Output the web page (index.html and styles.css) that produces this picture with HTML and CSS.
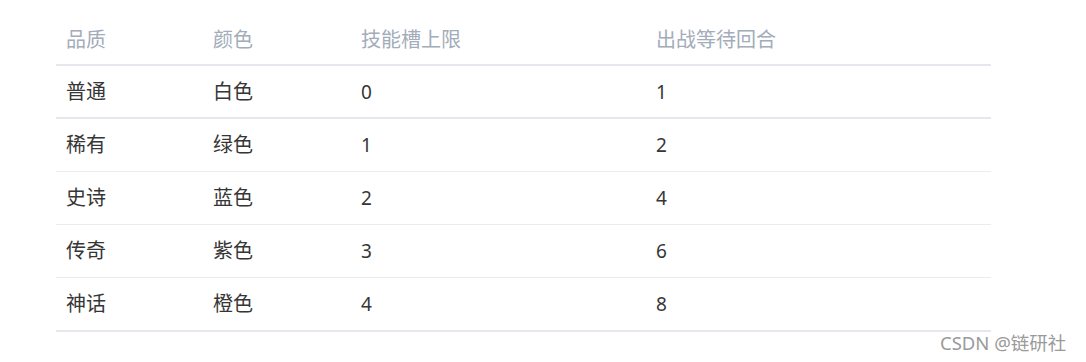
FILE: index.html
```html
<!DOCTYPE html>
<html lang="zh-CN">
<head>
<meta charset="utf-8">
<link rel="stylesheet" href="styles.css">
</head>
<body>
<div class="page">
  <table class="grid">
    <colgroup>
      <col class="c1"><col class="c2"><col class="c3"><col class="c4">
    </colgroup>
    <thead>
      <tr><th>品质</th><th>颜色</th><th>技能槽上限</th><th>出战等待回合</th></tr>
    </thead>
    <tbody>
      <tr><td>普通</td><td>白色</td><td>0</td><td>1</td></tr>
      <tr><td>稀有</td><td>绿色</td><td>1</td><td>2</td></tr>
      <tr><td>史诗</td><td>蓝色</td><td>2</td><td>4</td></tr>
      <tr><td>传奇</td><td>紫色</td><td>3</td><td>6</td></tr>
      <tr><td>神话</td><td>橙色</td><td>4</td><td>8</td></tr>
    </tbody>
  </table>
  <div class="mark">CSDN @链研社</div>
</div>
</body>
</html>
```
FILE: styles.css
```css
html, body {
  margin: 0;
  padding: 0;
  background: #ffffff;
}
body {
  font-family: "Noto Sans", "Noto Sans CJK SC", sans-serif;
}
.page {
  position: relative;
  width: 1086px;
  height: 362px;
  padding: 16px 0 0 56px;
  box-sizing: border-box;
}
.grid {
  width: 935px;
  table-layout: fixed;
  border-collapse: collapse;
  font-size: 20px;
  line-height: 24px;
}
.c1 { width: 147px; }
.c2 { width: 148px; }
.c3 { width: 295px; }
.c4 { width: 345px; }
.grid th {
  text-align: left;
  font-weight: normal;
  color: #a3acb9;
  padding: 12px 10px;
  border-bottom: 2px solid #e4e8ee;
}
.grid td {
  color: #363636;
  padding: 14px 10px 14px 10px;
  border-bottom: 1px solid #ececec;
}
.grid td:nth-child(n+3) {
  font-size: 19px;
}
.grid tbody tr:first-child td,
.grid tbody tr:last-child td {
  border-bottom: 2px solid #e4e8ee;
}
.grid tbody tr:first-child td {
  padding-bottom: 13px;
}
.mark {
  position: absolute;
  left: 940px;
  top: 332px;
  font-size: 18.5px;
  line-height: 22px;
  color: #9a9a9a;
  text-shadow: 0 0 1px #ffffff;
  white-space: nowrap;
}
```
